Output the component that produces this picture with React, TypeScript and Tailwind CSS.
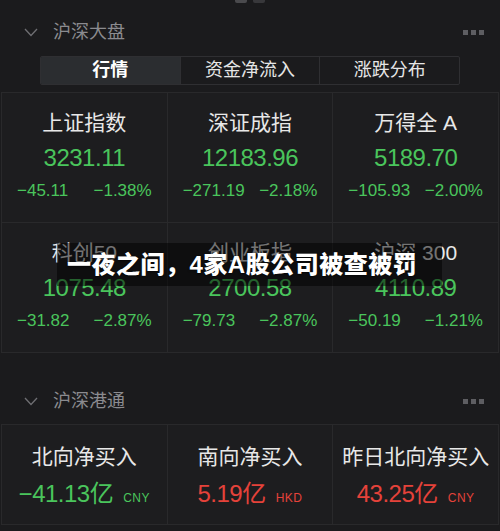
import React from 'react';

const GREEN = 'text-[#4ac55c]';
const RED = 'text-[#e5423a]';

const indices = [
  { name: '上证指数', value: '3231.11', diff: '−45.11', pct: '−1.38%' },
  { name: '深证成指', value: '12183.96', diff: '−271.19', pct: '−2.18%' },
  { name: '万得全 A', value: '5189.70', diff: '−105.93', pct: '−2.00%' },
  { name: '科创50', value: '1075.48', diff: '−31.82', pct: '−2.87%' },
  { name: '创业板指', value: '2700.58', diff: '−79.73', pct: '−2.87%' },
  { name: '沪深 300', value: '4110.89', diff: '−50.19', pct: '−1.21%' },
];

const flows = [
  { name: '北向净买入', value: '−41.13亿', unit: 'CNY', up: false },
  { name: '南向净买入', value: '5.19亿', unit: 'HKD', up: true },
  { name: '昨日北向净买入', value: '43.25亿', unit: 'CNY', up: true },
];

function SectionHeader({ title }: { title: string }) {
  return (
    <div className="h-[24px] flex items-center justify-between pl-[24px] pr-[16px]">
      <div className="flex items-center">
        <svg width="14" height="9" viewBox="0 0 14 9" fill="none">
          <polyline points="1,1 7,7.5 13,1" stroke="#6f6f73" strokeWidth="1.3" />
        </svg>
        <span className="ml-[15px] text-[18px] text-[#8b8b8f] leading-none">{title}</span>
      </div>
      <div className="flex gap-[3px]">
        <span className="w-[5px] h-[5px] bg-[#5e5e62]" />
        <span className="w-[5px] h-[5px] bg-[#5e5e62]" />
        <span className="w-[5px] h-[5px] bg-[#5e5e62]" />
      </div>
    </div>
  );
}

export default function App() {
  return (
    <div
      className="relative w-[500px] h-[531px] overflow-hidden bg-[#1b1b1d]"
      style={{ fontFamily: '"Liberation Sans", "Noto Sans CJK SC", sans-serif' }}
    >
      {/* top handle */}
      <div className="flex justify-center gap-[6px] h-[4px]">
        <span className="w-[12px] h-[3px] rounded-b-[2px] bg-[#4a4a4d]" />
        <span className="w-[12px] h-[3px] rounded-b-[2px] bg-[#38383b]" />
      </div>

      <div className="pt-[16px]">
        <SectionHeader title="沪深大盘" />
      </div>

      {/* Tabs */}
      <div className="mt-[12px] mx-[40px] h-[29px] flex border border-[#2f2f32] rounded-[2px] overflow-hidden">
        <div className="flex-1 flex items-center justify-center bg-[#2b2d30] text-white font-bold text-[18px]">行情</div>
        <div className="flex-1 flex items-center justify-center border-l border-[#2f2f32] text-[#e6e6e6] text-[18px]">资金净流入</div>
        <div className="flex-1 flex items-center justify-center border-l border-[#2f2f32] text-[#e6e6e6] text-[18px]">涨跌分布</div>
      </div>

      {/* Index grid */}
      <div className="mt-[7px] mx-[1px] grid grid-cols-3 border-t border-l border-[#29292b]">
        {indices.map((it) => (
          <div key={it.name} className="h-[130px] bg-[#1d1d1f] border-r border-b border-[#29292b] flex flex-col items-center pt-[17px]">
            <div className="text-[21px] leading-[26px] text-[#e8e8e8]">{it.name}</div>
            <div className={`mt-[6px] text-[24px] leading-[32px] tracking-[-0.5px] ${GREEN}`}>{it.value}</div>
            <div className={`mt-[6px] w-full flex justify-between px-[15px] text-[17px] leading-[22px] ${GREEN}`}>
              <span>{it.diff}</span>
              <span>{it.pct}</span>
            </div>
          </div>
        ))}
      </div>

      <div className="mt-[36px]">
        <SectionHeader title="沪深港通" />
      </div>

      {/* Connect grid */}
      <div className="mt-[11px] mx-[1px] grid grid-cols-3 border-t border-l border-[#29292b]">
        {flows.map((f) => (
          <div key={f.name} className="h-[100px] bg-[#1d1d1f] border-r border-b border-[#29292b] flex flex-col items-center pt-[19px]">
            <div className="text-[21px] leading-[26px] text-[#e8e8e8]">{f.name}</div>
            <div className={`mt-[8px] flex items-baseline ${f.up ? RED : GREEN}`}>
              <span className="text-[24px] leading-[32px] tracking-[-0.5px]">{f.value}</span>
              <span className="ml-[10px] text-[12px] tracking-[0.5px]">{f.unit}</span>
            </div>
          </div>
        ))}
      </div>

      {/* Headline overlay */}
      <div className="absolute left-[57px] top-[243px] w-[385px] h-[43px] bg-black/50 flex items-center pl-[10px]">
        <span className="text-white font-black text-[24px] leading-none tracking-[0.5px] [text-shadow:0_1px_2px_rgba(0,0,0,0.6)]">
          一夜之间，4家A股公司被查被罚
        </span>
      </div>
    </div>
  );
}
